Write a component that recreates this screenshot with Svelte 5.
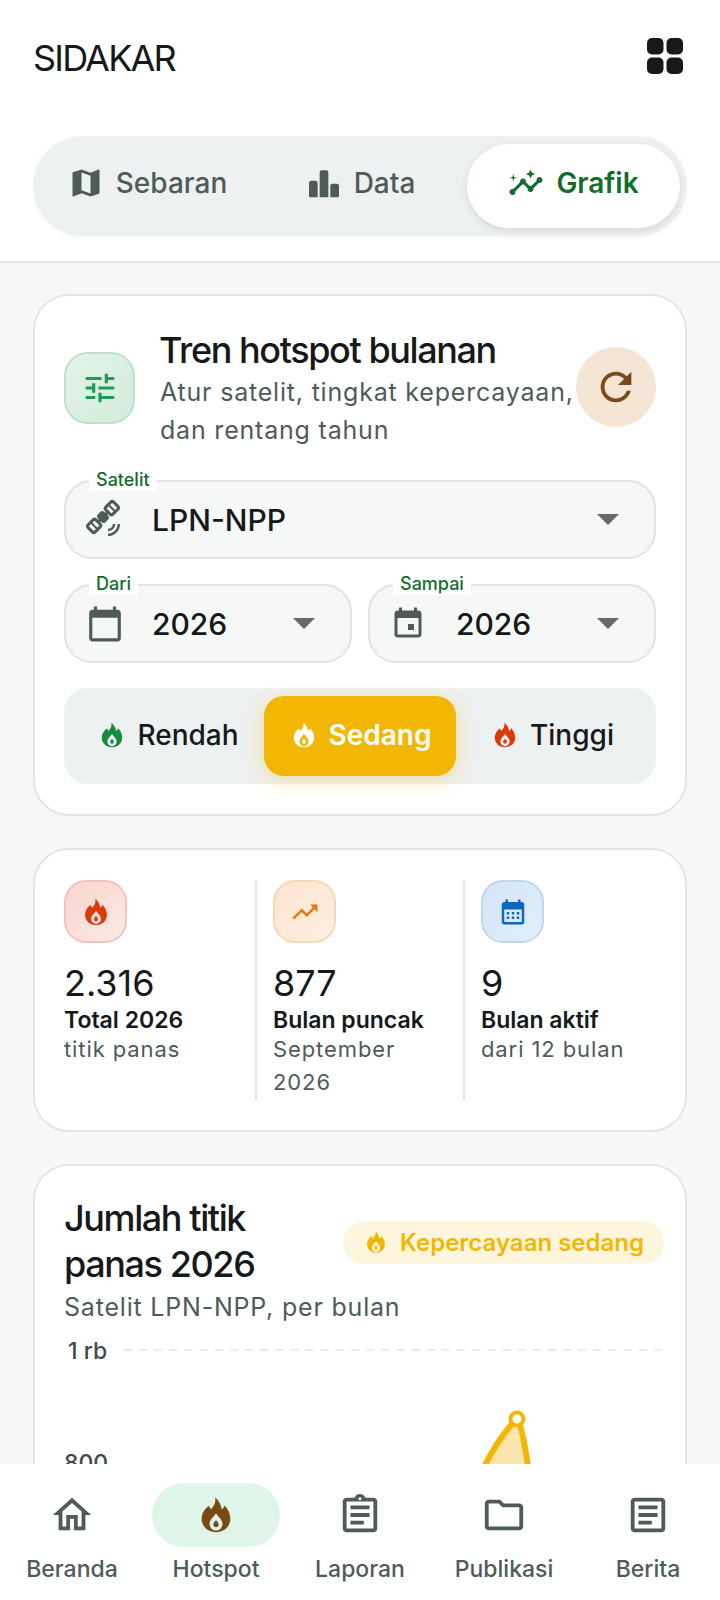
<script>
  const tabs = [
    { label: 'Sebaran', icon: 'map' },
    { label: 'Data', icon: 'bars' },
    { label: 'Grafik', icon: 'insights', active: true }
  ];
  const levels = [
    { label: 'Rendah', tone: 'low' },
    { label: 'Sedang', tone: 'mid', active: true },
    { label: 'Tinggi', tone: 'high' }
  ];
  const stats = [
    { icon: 'flame', tone: 'red', value: '2.316', label: 'Total 2026', sub: 'titik panas' },
    { icon: 'trend', tone: 'orange', value: '877', label: 'Bulan puncak', sub: 'September 2026' },
    { icon: 'month', tone: 'blue', value: '9', label: 'Bulan aktif', sub: 'dari 12 bulan' }
  ];
  const nav = [
    { label: 'Beranda', icon: 'home' },
    { label: 'Hotspot', icon: 'flame', active: true },
    { label: 'Laporan', icon: 'report' },
    { label: 'Publikasi', icon: 'folder' },
    { label: 'Berita', icon: 'article' }
  ];

  const paths = {
    map: 'M20.5 3l-.16.03L15 5.1 9 3 3.36 4.9c-.21.07-.36.25-.36.48V20.5c0 .28.22.5.5.5l.16-.03L9 18.9l6 2.1 5.64-1.9c.21-.07.36-.25.36-.48V3.5c0-.28-.22-.5-.5-.5zM15 19l-6-2.11V5l6 2.11V19z',
    bars: 'M2 12a1.500 1.500 0 0 1 1.500-1.500h2.800a1.500 1.500 0 0 1 1.500 1.500v9.500H3a1 1 0 0 1-1-1zM9.100 5a1.500 1.500 0 0 1 1.500-1.500h2.800a1.500 1.500 0 0 1 1.500 1.500v16.500H9.100zM16.200 14a1.500 1.500 0 0 1 1.500-1.500H20.500a1.500 1.500 0 0 1 1.500 1.500v6.500a1 1 0 0 1-1 1h-4.800z',
    insights: 'M21 8c-1.45 0-2.26 1.44-1.93 2.51l-3.55 3.56c-.3-.09-.74-.09-1.04 0l-2.55-2.55C12.27 10.45 11.46 9 10 9c-1.45 0-2.27 1.44-1.93 2.52l-4.56 4.55C2.44 15.74 1 16.55 1 18c0 1.1.9 2 2 2 1.45 0 2.26-1.44 1.93-2.51l4.55-4.56c.3.09.74.09 1.04 0l2.55 2.55C12.73 16.55 13.54 18 15 18c1.45 0 2.27-1.44 1.93-2.52l3.56-3.55c1.07.33 2.51-.48 2.51-1.93 0-1.1-.9-2-2-2zM15 9l.94-2.07L18 6l-2.06-.93L15 3l-.92 2.07L12 6l2.08.93zM3.500 11L4 9l2-.5L4 8l-.5-2L3 8l-2 .5L3 9z',
    tune: 'M3 17v2h6v-2H3zM3 5v2h10V5H3zm10 16v-2h8v-2h-8v-2h-2v6h2zM7 9v2H3v2h4v2h2V9H7zm14 4v-2H11v2h10zm-6-4h2V7h4V5h-4V3h-2v6z',
    refresh: 'M17.65 6.35C16.2 4.9 14.21 4 12 4c-4.42 0-7.99 3.58-7.99 8s3.57 8 7.99 8c3.73 0 6.84-2.55 7.73-6h-2.08c-.82 2.33-3.04 4-5.65 4-3.31 0-6-2.69-6-6s2.69-6 6-6c1.66 0 3.14.69 4.22 1.78L13 11h7V4l-2.35 2.35z',
    today: 'M20 3h-1V1h-2v2H7V1H5v2H4c-1.1 0-2 .9-2 2v16c0 1.1.9 2 2 2h16c1.1 0 2-.9 2-2V5c0-1.1-.9-2-2-2zm0 18H4V8h16v13z',
    event: 'M16 12h-4v4h4v-4zM16 1v2H8V1H6v2H5c-1.11 0-1.99.9-1.99 2L3 19c0 1.1.89 2 2 2h14c1.1 0 2-.9 2-2V5c0-1.1-.9-2-2-2h-1V1h-2zm3 18H5V8h14v11z',
    flame: 'M11.500 2C12 5 11 6.500 9.200 8.800 8.800 8 8.300 7.300 7.700 6.800 5 9 3.800 11.500 3.800 14.200 3.800 18.500 7.400 21.800 12 21.800s8.200-3.300 8.200-7.600c0-3-1.300-5.700-3.300-7.700-.4 1-.9 1.700-1.600 2.300C14.800 6 13.500 3.500 11.500 2zM12 11.200c1.600 2.100 3.700 3.700 3.700 6a3.700 3.700 0 0 1-7.400 0c0-2.300 2.100-3.900 3.700-6zM12 15c-.7.9-1.500 1.500-1.500 2.400a1.500 1.500 0 0 0 3 0c0-.9-.8-1.500-1.500-2.400z',
    trend: 'M16 6l2.290 2.290-4.880 4.880-4-4L2 16.590 3.410 18l6-6 4 4 6.300-6.290L22 12V6z',
    month: 'M19 4h-1V2h-2v2H8V2H6v2H5c-1.100 0-2 .9-2 2v14c0 1.100.9 2 2 2h14c1.100 0 2-.9 2-2V6c0-1.100-.9-2-2-2zm0 16H5V10h14zM7 12h2v2H7zm4 0h2v2h-2zm4 0h2v2h-2zm-8 3.500h2v2H7zm4 0h2v2h-2zm4 0h2v2h-2z',
    home: 'M12 5.690l5 4.500V18h-2v-6H9v6H7v-7.810l5-4.500M12 3L2 12h3v8h6v-6h2v6h6v-8h3L12 3z',
    report: 'M7 15h7v2H7zm0-4h10v2H7zm0-4h10v2H7zm12-4h-4.180C14.400 1.840 13.300 1 12 1c-1.300 0-2.400.84-2.820 2H5c-1.100 0-2 .9-2 2v14c0 1.100.9 2 2 2h14c1.100 0 2-.9 2-2V5c0-1.100-.9-2-2-2zm-7-.25c.41 0 .75.34.75.75s-.34.75-.75.75-.75-.34-.75-.75.34-.75.75-.75zM19 19H5V5h14v14z',
    folder: 'M9.170 6l2 2H20v10H4V6h5.170M10 4H4c-1.100 0-1.990.9-1.990 2L2 18c0 1.100.9 2 2 2h16c1.100 0 2-.9 2-2V8c0-1.100-.9-2-2-2h-8l-2-2z',
    article: 'M19 5v14H5V5h14m0-2H5c-1.100 0-2 .9-2 2v14c0 1.100.9 2 2 2h14c1.100 0 2-.9 2-2V5c0-1.100-.9-2-2-2zM14 17H7v-2h7v2zm3-4H7v-2h10v2zm0-4H7V7h10v2z'
  };
</script>

{#snippet icon(name, size)}
  <svg class="icon" width={size} height={size} viewBox="0 0 24 24" fill="currentColor" aria-hidden="true">
    <path fill-rule="evenodd" d={paths[name]} />
  </svg>
{/snippet}

{#snippet select(label, value, wide)}
  <div class="select">
    <span class="float">{label}</span>
    <span class="lead">
      {#if wide === 'sat'}
        <svg width="38" height="38" viewBox="0 0 38 38" fill="none" stroke="currentColor" aria-hidden="true">
          <g transform="rotate(-45 17 18)">
            <rect x="-1" y="13" width="11" height="10" rx="2" stroke-width="3" />
            <rect x="24" y="13" width="11" height="10" rx="2" stroke-width="3" />
            <path d="M4.500 13v10M29.500 13v10" stroke-width="2" />
            <path d="M10 18h14" stroke-width="3" />
            <rect x="12.500" y="12.500" width="9" height="11" rx="3" fill="currentColor" stroke="none" />
          </g>
          <path d="M22 31c3.500-.3 5.800-2.600 6.100-6M22 36c6-.3 10.700-5 11-11" stroke-width="2.500" />
        </svg>
      {:else}
        {@render icon(wide, wide === 'today' ? 38 : 36)}
      {/if}
    </span>
    <span class="value">{value}</span>
    <span class="caret"></span>
  </div>
{/snippet}

<div class="shell">
  <header class="top">
    <div class="brand-row">
      <span class="brand">SIDAKAR</span>
      <svg class="grid" width="36" height="36" viewBox="0 0 36 36" fill="currentColor" aria-hidden="true">
        <rect x="0" y="0" width="16.500" height="16.500" rx="5" />
        <rect x="19.500" y="0" width="16.500" height="16.500" rx="5" />
        <rect x="0" y="19.500" width="16.500" height="16.500" rx="5" />
        <rect x="19.500" y="19.500" width="16.500" height="16.500" rx="5" />
      </svg>
    </div>
    <div class="tabs">
      {#each tabs as t}
        <div class="tab" class:on={t.active}>
          {@render icon(t.icon, 36)}
          <span>{t.label}</span>
        </div>
      {/each}
    </div>
  </header>

  <main>
    <section class="card filter">
      <div class="filter-head">
        <div class="tile green">{@render icon('tune', 38)}</div>
        <div class="filter-copy">
          <h2>Tren hotspot bulanan</h2>
          <p>Atur satelit, tingkat kepercayaan,<br />dan rentang tahun</p>
        </div>
        <div class="refresh">{@render icon('refresh', 46)}</div>
      </div>

      {@render select('Satelit', 'LPN-NPP', 'sat')}
      <div class="years">
        {@render select('Dari', '2026', 'today')}
        {@render select('Sampai', '2026', 'event')}
      </div>

      <div class="levels">
        {#each levels as l}
          <div class="level {l.tone}" class:on={l.active}>
            {@render icon('flame', 30)}
            <span>{l.label}</span>
          </div>
        {/each}
      </div>
    </section>

    <section class="card stats">
      {#each stats as s}
        <div class="stat">
          <div class="tile small {s.tone}">{@render icon(s.icon, s.icon === 'flame' ? 32 : 30)}</div>
          <div class="num">{s.value}</div>
          <div class="lab">{s.label}</div>
          <div class="sub">{s.sub}</div>
        </div>
      {/each}
    </section>

    <section class="card chart">
      <div class="chart-head">
        <h2>Jumlah titik panas 2026</h2>
        <div class="badge">{@render icon('flame', 26)}<span>Kepercayaan sedang</span></div>
      </div>
      <p class="chart-sub">Satelit LPN-NPP, per bulan</p>
      <svg class="plot" width="606" height="220" viewBox="0 0 606 220" aria-hidden="true">
        <text x="4" y="29" class="tick">1 rb</text>
        <line x1="60" x2="598" y1="20" y2="20" class="rule" />
        <text x="0" y="141" class="tick">800</text>
        <line x1="60" x2="598" y1="135" y2="135" class="rule" />
        <path d="M385 220 C408 160 428 112 453 89 C459 95 467 150 474 220 Z" fill="#fbe5ae" />
        <path d="M385 220 C408 160 428 112 453 89 C459 95 467 150 474 220" fill="none" stroke="#f2b705" stroke-width="6" />
        <circle cx="453" cy="89" r="6.500" fill="#fff" stroke="#f2b705" stroke-width="4" />
      </svg>
    </section>
  </main>

  <nav>
    {#each nav as n}
      <div class="nav-item" class:on={n.active}>
        <span class="pill">{@render icon(n.icon, n.icon === 'flame' ? 42 : 46)}</span>
        <span class="nav-label">{n.label}</span>
      </div>
    {/each}
  </nav>
</div>

<style>
  :global(body) {
    margin: 0;
    background: #fff;
  }

  .shell {
    display: flex;
    flex-direction: column;
    height: 1600px;
    overflow: hidden;
    font-family: Inter, "Noto Sans", sans-serif;
    color: #15191a;
  }

  .icon {
    display: block;
    flex: none;
  }

  .top {
    background: #fff;
    border-bottom: 2px solid #e2e6e5;
    padding: 0 33px 24px;
    height: 263px;
    box-sizing: border-box;
    flex: none;
  }

  .brand-row {
    display: flex;
    justify-content: space-between;
    align-items: center;
    height: 116px;
    padding: 0 4px 0 0;
    box-sizing: border-box;
  }

  .brand {
    font-size: 36px;
    font-weight: 400;
    letter-spacing: -1.8px;
  }

  .grid {
    color: #15191a;
    margin-top: -4px;
  }

  .tabs {
    margin-top: 20px;
    height: 100px;
    box-sizing: border-box;
    padding: 8px 6px 8px 8px;
    border-radius: 50px;
    background: #eef1f1;
    display: grid;
    grid-template-columns: 213px 213px 213px;
    box-shadow: 0 2px 3px rgba(0, 0, 0, 0.03);
  }

  .tab {
    display: flex;
    align-items: center;
    justify-content: center;
    gap: 12px;
    border-radius: 42px;
    font-size: 28px;
    font-weight: 500;
    color: #4f5b59;
    padding-bottom: 6px;
    box-sizing: border-box;
  }

  .tab.on {
    background: #fff;
    color: #146c2e;
    font-weight: 600;
    box-shadow: 0 3px 8px rgba(0, 0, 0, 0.1);
  }

  main {
    flex: 1;
    min-height: 0;
    overflow: hidden;
    background: #f5f8f7;
    padding: 31px 33px 0;
    display: flex;
    flex-direction: column;
    gap: 32px;
  }

  .card {
    flex: none;
    background: #fff;
    border: 2px solid #e2e6e5;
    border-radius: 36px;
    box-sizing: border-box;
  }

  .filter {
    height: 522px;
    padding: 28px 29px 0;
  }

  .filter-head {
    display: flex;
    align-items: center;
    height: 128px;
    margin-bottom: 28px;
  }

  .tile {
    flex: none;
    width: 71px;
    height: 72px;
    box-sizing: border-box;
    border-radius: 24px;
    border: 2px solid transparent;
    display: flex;
    align-items: center;
    justify-content: center;
  }

  .tile.green {
    background: linear-gradient(135deg, #e3f3e8, #d3ebdd);
    border-color: #bfe0cc;
    color: #1e9b57;
  }

  .tile.small {
    width: 63px;
    height: 63px;
    border-radius: 22px;
  }

  .red {
    background: linear-gradient(135deg, #f7d6d0, #fde8e3);
    border-color: #f2c4bb !important;
    color: #dc3a0c;
  }

  .orange {
    background: linear-gradient(135deg, #fde5cf, #feefe0);
    border-color: #f9d6b5 !important;
    color: #e8770f;
  }

  .blue {
    background: linear-gradient(135deg, #d3e5f7, #e2eefa);
    border-color: #bcd8f2 !important;
    color: #0d66c2;
  }

  .filter-copy {
    flex: 1;
    min-width: 0;
    padding-left: 24px;
    white-space: nowrap;
  }

  h2 {
    margin: 0;
    font-size: 36px;
    font-weight: 500;
    letter-spacing: -1.4px;
    line-height: 46px;
    color: #15191a;
  }

  .filter-copy p {
    margin: 0 0 0 1px;
    font-size: 25px;
    line-height: 38px;
    letter-spacing: 0.8px;
    color: #4f5b59;
  }

  .refresh {
    flex: none;
    width: 80px;
    height: 80px;
    margin-top: -2px;
    border-radius: 50%;
    background: #f4e4d3;
    color: #7a4a1a;
    display: flex;
    align-items: center;
    justify-content: center;
  }

  .select {
    position: relative;
    height: 79px;
    box-sizing: border-box;
    border: 2px solid #e0e4e3;
    border-radius: 28px;
    background: #f6f8f7;
    display: flex;
    align-items: center;
    padding: 0 24px 0 20px;
  }

  .float {
    position: absolute;
    top: -13px;
    left: 23px;
    padding: 0 7px;
    background: #fff;
    font-size: 18px;
    line-height: 22px;
    font-weight: 500;
    color: #146c2e;
  }

  .lead {
    width: 66px;
    flex: none;
    color: #4f5b59;
  }

  .value {
    flex: 1;
    font-size: 30px;
    font-weight: 500;
    color: #15191a;
  }

  .caret {
    width: 0;
    height: 0;
    border-left: 11px solid transparent;
    border-right: 11px solid transparent;
    border-top: 11px solid #666a6b;
    margin-right: 11px;
  }

  .years {
    display: grid;
    grid-template-columns: 288px 288px;
    justify-content: space-between;
    margin-top: 25px;
  }

  .levels {
    margin-top: 25px;
    height: 96px;
    box-sizing: border-box;
    padding: 8px;
    border-radius: 24px;
    background: #eef1f1;
    display: grid;
    grid-template-columns: repeat(3, 1fr);
  }

  .level {
    display: flex;
    align-items: center;
    justify-content: center;
    gap: 10px;
    border-radius: 20px;
    font-size: 28px;
    font-weight: 500;
    color: #15191a;
    padding: 0 0 2px 4px;
  }

  .level .icon {
    margin-left: -4px;
  }

  .low .icon {
    color: #188a42;
  }

  .high .icon {
    color: #dc3a0c;
  }

  .level.on {
    background: #f2b705;
    color: #fff;
    font-weight: 600;
    box-shadow: 0 4px 22px rgba(242, 183, 5, 0.32);
  }

  .stats {
    height: 284px;
    padding: 30px 29px 0;
    display: grid;
    grid-template-columns: 191px 208px 1fr;
  }

  .stat {
    height: 220px;
    padding-left: 16px;
    border-left: 2px solid #e2e6e5;
    box-sizing: border-box;
  }

  .stat:first-child {
    padding-left: 0;
    border-left: 0;
  }

  .num {
    margin-top: 17px;
    font-size: 36px;
    line-height: 47px;
    font-weight: 400;
    color: #15191a;
  }

  .lab {
    font-size: 23px;
    line-height: 26px;
    font-weight: 600;
    color: #15191a;
    white-space: nowrap;
  }

  .sub {
    font-size: 22px;
    line-height: 33px;
    letter-spacing: 0.9px;
    color: #4f5b59;
    padding-right: 20px;
  }

  .chart {
    height: 520px;
    padding: 29px 21px 0 29px;
  }

  .chart-head {
    display: flex;
    align-items: center;
    justify-content: space-between;
  }

  .chart-head h2 {
    width: 240px;
  }

  .badge {
    display: flex;
    align-items: center;
    gap: 11px;
    height: 43px;
    padding: 0 20px 0 20px;
    border-radius: 22px;
    background: #fdf6dc;
    color: #f2b705;
    font-size: 24px;
    font-weight: 600;
    white-space: nowrap;
    margin-top: 2px;
  }

  .chart-sub {
    margin: 4px 0 0;
    font-size: 25px;
    line-height: 32px;
    letter-spacing: 0.8px;
    color: #4f5b59;
  }

  .plot {
    display: block;
    margin-top: 7px;
  }

  .tick {
    font-family: Inter, "Noto Sans", sans-serif;
    font-size: 23px;
    font-weight: 500;
    fill: #3f4a48;
  }

  .rule {
    stroke: #e3e6e5;
    stroke-width: 1.500;
    stroke-dasharray: 8 7.14;
  }

  nav {
    flex: none;
    height: 136px;
    background: #fff;
    display: grid;
    grid-template-columns: repeat(5, 144px);
  }

  .nav-item {
    display: flex;
    flex-direction: column;
    align-items: center;
    padding-top: 19px;
    color: #4f5b59;
  }

  .pill {
    width: 128px;
    height: 64px;
    border-radius: 32px;
    display: flex;
    align-items: center;
    justify-content: center;
  }

  .nav-item.on .pill {
    background: #dff5e7;
    color: #7a4a14;
  }

  .nav-label {
    margin-top: 8px;
    font-size: 23px;
    line-height: 28px;
    font-weight: 500;
  }
</style>
